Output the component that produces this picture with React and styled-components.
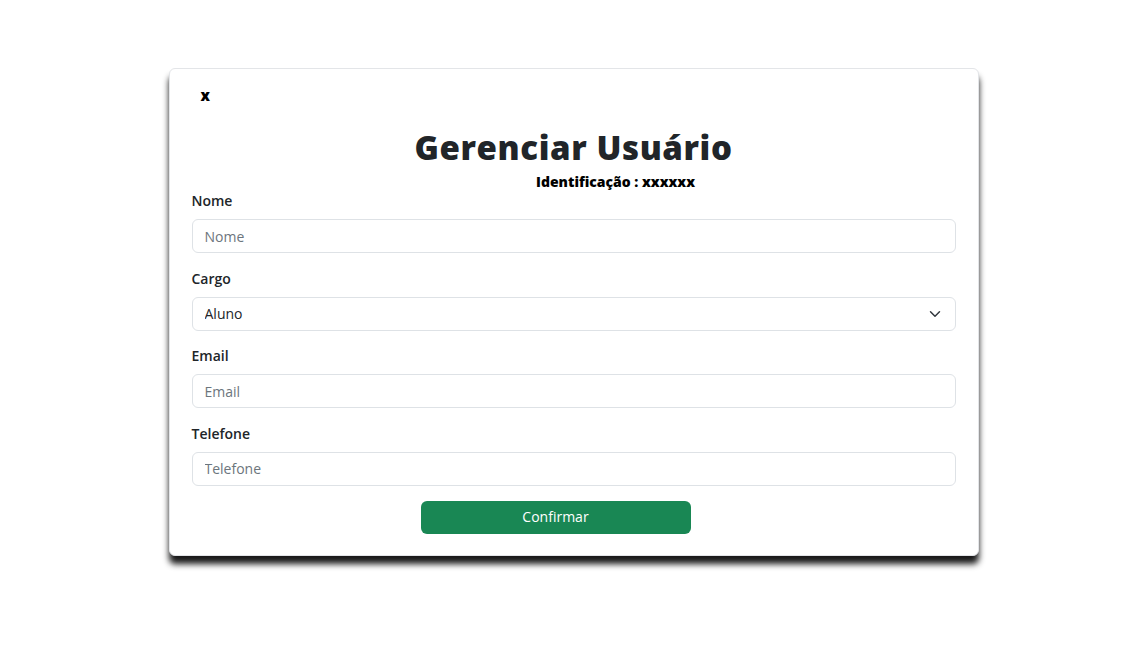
import React from "react";
import styled, { createGlobalStyle } from "styled-components";

const Global = createGlobalStyle`
  html, body { margin: 0; padding: 0; background: #ffffff; }
  body { font-family: "Open Sans", "Noto Sans", "Liberation Sans", sans-serif; color: #212529; }
  * { box-sizing: border-box; }
`;

const Page = styled.div`
  display: flex;
  justify-content: center;
  padding-top: 68px;
  min-height: 646px;
`;

const Modal = styled.div`
  width: 810px;
  background: #fff;
  border: 1px solid #e3e5e8;
  border-radius: 6px;
  box-shadow: 0 8px 6px 0 rgba(0, 0, 0, 0.9);
  padding: 15px 22px 21px;
  display: flex;
  flex-direction: column;
  height: 488px;
`;

const CloseButton = styled.button`
  align-self: flex-start;
  margin-left: 9px;
  padding: 0;
  border: none;
  background: transparent;
  font-family: inherit;
  font-weight: 800;
  font-size: 15px;
  line-height: 22px;
  height: 22px;
  color: #000;
  cursor: pointer;
`;

const Title = styled.h2`
  margin: 22px 0 0;
  text-align: center;
  font-size: 33px;
  line-height: 39px;
  font-weight: 800;
  letter-spacing: 0.6px;
  color: #212529;
`;

const Subtitle = styled.h6`
  margin: 6px 0 0;
  padding-left: 84px;
  text-align: center;
  font-size: 14px;
  line-height: 17px;
  font-weight: 800;
  color: #000;
`;

const Fields = styled.div`
  display: flex;
  flex-direction: column;
  gap: 14.5px;
`;

const Field = styled.div`
  display: flex;
  flex-direction: column;
`;

const Label = styled.label`
  font-size: 14px;
  line-height: 21px;
  font-weight: 600;
  margin-bottom: 8px;
  color: #212529;
`;

const controlCss = `
  width: 100%;
  height: 34px;
  padding: 6px 12px;
  font-family: inherit;
  font-size: 14px;
  line-height: 20px;
  color: #212529;
  background-color: #fff;
  border: 1px solid #dee2e6;
  border-radius: 6px;
  outline: none;
`;

const Input = styled.input`
  ${controlCss}
  &::placeholder { color: #6c757d; opacity: 1; }
`;

const Select = styled.select`
  ${controlCss}
  appearance: none;
  padding-right: 36px;
  background-image: url("data:image/svg+xml,%3csvg xmlns='http://www.w3.org/2000/svg' viewBox='0 0 16 16'%3e%3cpath fill='none' stroke='%23343a40' stroke-linecap='round' stroke-linejoin='round' stroke-width='2' d='m2 5 6 6 6-6'/%3e%3c/svg%3e");
  background-repeat: no-repeat;
  background-position: right 12px center;
  background-size: 16px 12px;
`;

const ConfirmButton = styled.button`
  margin: 15px 0 0 229px;
  width: 270px;
  height: 34px;
  border: none;
  border-radius: 6px;
  background: #198754;
  color: #fff;
  font-family: inherit;
  font-size: 14px;
  line-height: 20px;
  cursor: pointer;
`;

const fields = [
  { label: "Nome", type: "text" },
  { label: "Cargo", type: "select" },
  { label: "Email", type: "email" },
  { label: "Telefone", type: "tel" },
];

export default function App() {
  return (
    <>
      <Global />
      <Page>
        <Modal>
          <CloseButton>x</CloseButton>
          <Title>Gerenciar Usuário</Title>
          <Subtitle>Identificação : xxxxxx</Subtitle>
          <Fields>
            {fields.map((f) => (
              <Field key={f.label}>
                <Label>{f.label}</Label>
                {f.type === "select" ? (
                  <Select defaultValue="Aluno">
                    <option>Aluno</option>
                    <option>Professor</option>
                  </Select>
                ) : (
                  <Input type={f.type} placeholder={f.label} />
                )}
              </Field>
            ))}
          </Fields>
          <ConfirmButton>Confirmar</ConfirmButton>
        </Modal>
      </Page>
    </>
  );
}
